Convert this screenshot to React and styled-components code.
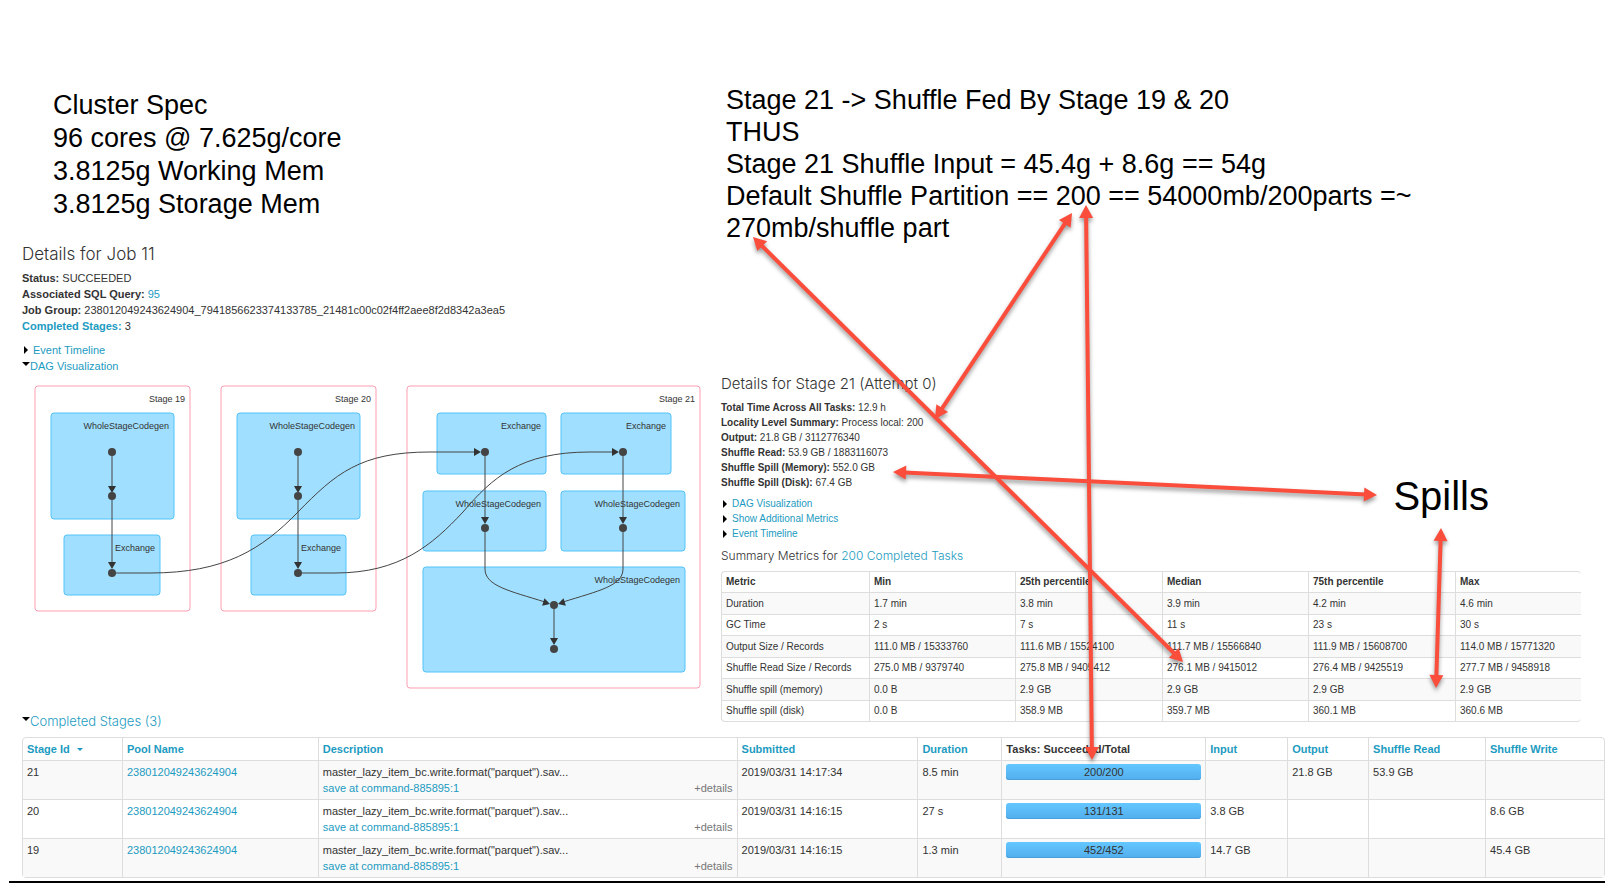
import React from "react";
import styled, { createGlobalStyle } from "styled-components";

const GlobalStyle = createGlobalStyle`
  *, *::before, *::after { box-sizing: border-box; }
  body {
    margin: 0;
    background: #fff;
    color: #333;
    font-family: "Liberation Sans", Arial, sans-serif;
    font-size: 11px;
    line-height: 16px;
  }
  h1, h2, h3, p, ul { margin: 0; padding: 0; }
`;

const Page = styled.main`
  position: relative;
  display: flex;
  flex-direction: column;
  min-width: 1200px;
`;

const Panels = styled.div`
  display: grid;
  grid-template-columns: 699fr 884fr;
  align-items: start;
  padding: 84px 9px 0 22px;
`;

const JobPanel = styled.section`
  min-width: 0;
  padding-top: 5px;
`;

const StagePanel = styled.section`
  min-width: 0;
  padding-right: 24px;
`;

const Note = styled.div`
  padding-left: ${(p) => p.$indent}px;
  margin-bottom: ${(p) => p.$after}px;
  color: #000;
  font-size: 27px;
  line-height: ${(p) => p.$line}px;
  white-space: nowrap;
`;

const Heading = styled.h2`
  font-family: Inter, "Liberation Sans", sans-serif;
  font-size: ${(p) => p.$size}px;
  font-weight: 300;
  line-height: 20px;
  white-space: nowrap;
`;

const SubHeading = styled.h3`
  display: flex;
  font-family: Inter, "Liberation Sans", sans-serif;
  font-size: ${(p) => p.$size}px;
  font-weight: 300;
  line-height: 18px;
  white-space: pre;
`;

const Link = styled.a`
  color: #1c9bc1;
  text-decoration: none;
  white-space: nowrap;
`;

const Facts = styled.ul`
  && { margin: 6px 0; }
  list-style: none;
  font-size: ${(p) => (p.$compact ? 10 : 11)}px;
  line-height: ${(p) => (p.$compact ? 15 : 16)}px;
  white-space: nowrap;
`;

const Toggles = styled.div`
  padding-top: 2px;
`;

const Toggle = styled.button`
  display: flex;
  align-items: center;
  padding: 0;
  border: 0;
  background: none;
  color: #1c9bc1;
  font: inherit;
  cursor: pointer;
`;

const Marker = styled.svg`
  flex: none;
  width: ${(p) => (p.$open ? 8 : 11)}px;
  height: 10px;
`;

const Dag = styled.svg`
  display: block;
  width: 100%;
  margin-bottom: 8px;
  font-size: 9px;
  fill: #333;

  .stage { fill: #fff; stroke: #ff9db2; }
  .cluster { fill: #a0dfff; stroke: #52c3fb; }
  .edge { fill: none; stroke: #444; }
  .node { fill: #444; }
  .head { fill: #333; }
  text { text-anchor: end; }
`;

const StageSummary = styled.div`
  display: flex;
  justify-content: space-between;
  padding-right: 92px;
`;

const Callout = styled.div`
  align-self: center;
  padding-top: 70px;
  color: #000;
  font-size: 40px;
  line-height: 46px;
`;

const Grid = styled.table`
  width: 100%;
  margin-top: ${(p) => (p.$compact ? 6 : 7)}px;
  border: 1px solid #ddd;
  border-right-width: ${(p) => (p.$compact ? 0 : 1)}px;
  border-radius: 4px;
  border-collapse: separate;
  border-spacing: 0;
  table-layout: fixed;
  font-size: ${(p) => (p.$compact ? 10 : 11)}px;

  th, td {
    height: ${(p) => (p.$compact ? 22 : 39)}px;
    padding: ${(p) => (p.$compact ? "0 4px" : "3px 4px")};
    border-left: 1px solid #ddd;
    text-align: left;
    vertical-align: ${(p) => (p.$compact ? "middle" : "top")};
    white-space: nowrap;
  }
  th { height: ${(p) => (p.$compact ? 20 : 22)}px; }
  th:first-child, td:first-child { border-left: 0; }
  td { border-top: 1px solid #ddd; }
  tbody tr:nth-child(odd) td { background: #f9f9f9; }
  tbody tr:nth-child(even) td { height: ${(p) => (p.$compact ? 21 : 39)}px; }
`;

const Completed = styled.section`
  padding: 0 9px 0 22px;
`;

const Caret = styled.span`
  display: inline-block;
  margin-left: 7px;
  vertical-align: 2px;
  border: 3px solid transparent;
  border-top-color: #1c9bc1;
  border-bottom: 0;
`;

const Details = styled.button`
  display: block;
  margin-left: auto;
  padding: 0;
  border: 0;
  background: none;
  color: #777;
  font: inherit;
  cursor: pointer;
`;

const DescriptionFoot = styled.div`
  display: flex;
`;

const Progress = styled.div`
  height: 16px;
  border-radius: 3px;
  background: linear-gradient(#64c7ff, #52aeed);
  box-shadow: inset 0 -1px 0 #4a9fdb;
  text-align: center;
`;

const Rule = styled.hr`
  width: calc(100% - 18px);
  height: 2px;
  margin: 3px 9px 0;
  border: 0;
  background: #000;
`;

const Overlay = styled.svg`
  position: absolute;
  inset: 0;
  width: 100%;
  height: 100%;
  pointer-events: none;
  fill: #fa4d3b;
  stroke: #fa4d3b;
  filter: drop-shadow(0 3px 2px rgba(0, 0, 0, 0.4));

  line { stroke-width: 4; }
  polygon { stroke: none; }
`;

function Disclosure({ open, children }) {
  return (
    <Toggle type="button" aria-expanded={!!open}>
      <Marker $open={open} viewBox={open ? "0 0 8 10" : "0 0 11 10"} aria-hidden="true">
        <path d={open ? "M0 1H8L4 5Z" : "M2 1L6 5L2 9Z"} fill="#000" />
      </Marker>
      {children}
    </Toggle>
  );
}

const STAGES = [
  [35, 386, 155, 225, "Stage 19"],
  [221, 386, 155, 225, "Stage 20"],
  [407, 386, 293, 302, "Stage 21"],
];

const CLUSTERS = [
  [51, 413, 123, 106, "WholeStageCodegen"],
  [64, 535, 96, 60, "Exchange"],
  [237, 413, 123, 106, "WholeStageCodegen"],
  [251, 535, 95, 60, "Exchange"],
  [437, 413, 109, 61, "Exchange"],
  [561, 413, 110, 61, "Exchange"],
  [423, 491, 123, 60, "WholeStageCodegen"],
  [561, 491, 124, 60, "WholeStageCodegen"],
  [423, 567, 262, 105, "WholeStageCodegen"],
];

const NODES = [
  [112, 452], [112, 496], [112, 573],
  [298, 452], [298, 496], [298, 573],
  [485, 452], [485, 528], [623, 452], [623, 528],
  [554, 605], [554, 649],
];

const EDGES = [
  "M112 452V490", "M112 496V566", "M298 452V490", "M298 496V566",
  "M485 452V521", "M623 452V521", "M554 605V643",
  "M112 573H150C225 573 262 549 298 512C335 474 360 452 430 452H476",
  "M298 573H335C400 573 432 545 463 512C492 478 520 452 590 452H614",
  "M485 528V569C485 586 510 591 545 602",
  "M623 528V569C623 586 598 591 563 602",
];

const HEADS = [
  [112, 493, 90], [112, 569, 90], [298, 493, 90], [298, 569, 90],
  [485, 524, 90], [623, 524, 90], [554, 645, 90],
  [481, 452, 0], [619, 452, 0], [550, 604, 17], [558, 604, 163],
];

function DagChart() {
  return (
    <Dag viewBox="22 374 699 330" role="img" aria-label="DAG Visualization">
      {STAGES.map(([x, y, w, h, label]) => (
        <g key={label}>
          <rect className="stage" x={x} y={y} width={w} height={h} rx="3" />
          <text x={x + w - 5} y={y + 16}>{label}</text>
        </g>
      ))}
      {CLUSTERS.map(([x, y, w, h, label], i) => (
        <g key={i}>
          <rect className="cluster" x={x} y={y} width={w} height={h} rx="3" />
          <text x={x + w - 5} y={y + 16}>{label}</text>
        </g>
      ))}
      {EDGES.map((d) => <path key={d} className="edge" d={d} />)}
      {HEADS.map(([x, y, a], i) => (
        <path key={i} className="head" d="M0 0L-7 -4V4Z" transform={`translate(${x} ${y}) rotate(${a})`} />
      ))}
      {NODES.map(([x, y], i) => <circle key={i} className="node" cx={x} cy={y} r="4" />)}
    </Dag>
  );
}

const ARROWS = [
  [753, 237, 1183, 662],
  [1072, 213, 935, 419],
  [1086, 205, 1092, 760],
  [893, 472, 1377, 495],
  [1441, 528, 1436, 688],
];

function Arrow({ from: [x1, y1], to: [x2, y2] }) {
  const angle = (Math.atan2(y2 - y1, x2 - x1) * 180) / Math.PI;
  const length = Math.hypot(x2 - x1, y2 - y1);
  return (
    <g transform={`translate(${x1} ${y1}) rotate(${angle})`}>
      <line x1="11" y1="0" x2={length - 11} y2="0" />
      <polygon points="0,0 13,-7 13,7" />
      <polygon points={`${length},0 ${length - 13},-7 ${length - 13},7`} />
    </g>
  );
}

const METRICS = [
  ["Duration", "1.7 min", "3.8 min", "3.9 min", "4.2 min", "4.6 min"],
  ["GC Time", "2 s", "7 s", "11 s", "23 s", "30 s"],
  ["Output Size / Records", "111.0 MB / 15333760", "111.6 MB / 15524100", "111.7 MB / 15566840", "111.9 MB / 15608700", "114.0 MB / 15771320"],
  ["Shuffle Read Size / Records", "275.0 MB / 9379740", "275.8 MB / 9405412", "276.1 MB / 9415012", "276.4 MB / 9425519", "277.7 MB / 9458918"],
  ["Shuffle spill (memory)", "0.0 B", "2.9 GB", "2.9 GB", "2.9 GB", "2.9 GB"],
  ["Shuffle spill (disk)", "0.0 B", "358.9 MB", "359.7 MB", "360.1 MB", "360.6 MB"],
];

const COMPLETED = [
  { id: 21, submitted: "2019/03/31 14:17:34", duration: "8.5 min", tasks: 200, input: "", output: "21.8 GB", read: "53.9 GB", write: "" },
  { id: 20, submitted: "2019/03/31 14:16:15", duration: "27 s", tasks: 131, input: "3.8 GB", output: "", read: "", write: "8.6 GB" },
  { id: 19, submitted: "2019/03/31 14:16:15", duration: "1.3 min", tasks: 452, input: "14.7 GB", output: "", read: "", write: "45.4 GB" },
];

const METRIC_COLUMNS = [147, 146, 147, 146, 147, 126];
const COMPLETED_COLUMNS = [99, 196, 419, 181, 84, 204, 82, 81, 117, 119];

function Columns({ widths }) {
  const total = widths.reduce((a, b) => a + b, 0);
  return (
    <colgroup>
      {widths.map((w, i) => <col key={i} style={{ width: `${(w / total) * 100}%` }} />)}
    </colgroup>
  );
}

export default function App() {
  return (
    <>
      <GlobalStyle />
      <Page>
        <Panels>
          <JobPanel>
            <Note $indent={31} $line={33} $after={23}>
              Cluster Spec<br />
              96 cores @ 7.625g/core<br />
              3.8125g Working Mem<br />
              3.8125g Storage Mem
            </Note>
            <Heading $size={17}>Details for Job 11</Heading>
            <Facts>
              <li><b>Status:</b> SUCCEEDED</li>
              <li><b>Associated SQL Query:</b> <Link href="#query">95</Link></li>
              <li><b>Job Group:</b> 238012049243624904_7941856623374133785_21481c00c02f4ff2aee8f2d8342a3ea5</li>
              <li><Link href="#completed"><b>Completed Stages:</b></Link> 3</li>
            </Facts>
            <Toggles>
              <Disclosure>Event Timeline</Disclosure>
              <Disclosure open>DAG Visualization</Disclosure>
            </Toggles>
            <DagChart />
            <SubHeading id="completed" $size={13}><Disclosure open>Completed Stages (3)</Disclosure></SubHeading>
          </JobPanel>

          <StagePanel>
            <Note $indent={5} $line={32} $after={130}>
              Stage 21 -&gt; Shuffle Fed By Stage 19 &amp; 20<br />
              THUS<br />
              Stage 21 Shuffle Input = 45.4g + 8.6g == 54g<br />
              Default Shuffle Partition == 200 == 54000mb/200parts =~<br />
              270mb/shuffle part
            </Note>
            <StageSummary>
              <div>
                <Heading $size={15}>Details for Stage 21 (Attempt 0)</Heading>
                <Facts $compact>
                  <li><b>Total Time Across All Tasks:</b> 12.9 h</li>
                  <li><b>Locality Level Summary:</b> Process local: 200</li>
                  <li><b>Output:</b> 21.8 GB / 3112776340</li>
                  <li><b>Shuffle Read:</b> 53.9 GB / 1883116073</li>
                  <li><b>Shuffle Spill (Memory):</b> 552.0 GB</li>
                  <li><b>Shuffle Spill (Disk):</b> 67.4 GB</li>
                </Facts>
                <Facts $compact>
                  <li><Disclosure>DAG Visualization</Disclosure></li>
                  <li><Disclosure>Show Additional Metrics</Disclosure></li>
                  <li><Disclosure>Event Timeline</Disclosure></li>
                </Facts>
              </div>
              <Callout>Spills</Callout>
            </StageSummary>
            <SubHeading $size={12}>Summary Metrics for <Link href="#tasks">200 Completed Tasks</Link></SubHeading>
            <Grid $compact>
              <Columns widths={METRIC_COLUMNS} />
              <thead>
                <tr>
                  {["Metric", "Min", "25th percentile", "Median", "75th percentile", "Max"].map((h) => (
                    <th key={h} scope="col">{h}</th>
                  ))}
                </tr>
              </thead>
              <tbody>
                {METRICS.map((row) => (
                  <tr key={row[0]}>{row.map((cell, i) => <td key={i}>{cell}</td>)}</tr>
                ))}
              </tbody>
            </Grid>
          </StagePanel>
        </Panels>

        <Completed>
          <Grid>
            <Columns widths={COMPLETED_COLUMNS} />
            <thead>
              <tr>
                <th scope="col"><Link href="#id">Stage Id<Caret /></Link></th>
                <th scope="col"><Link href="#pool">Pool Name</Link></th>
                <th scope="col"><Link href="#description">Description</Link></th>
                <th scope="col"><Link href="#submitted">Submitted</Link></th>
                <th scope="col"><Link href="#duration">Duration</Link></th>
                <th scope="col">Tasks: Succeeded/Total</th>
                <th scope="col"><Link href="#input">Input</Link></th>
                <th scope="col"><Link href="#output">Output</Link></th>
                <th scope="col"><Link href="#read">Shuffle Read</Link></th>
                <th scope="col"><Link href="#write">Shuffle Write</Link></th>
              </tr>
            </thead>
            <tbody>
              {COMPLETED.map((s) => (
                <tr key={s.id}>
                  <td>{s.id}</td>
                  <td><Link href="#pool">238012049243624904</Link></td>
                  <td>
                    master_lazy_item_bc.write.format("parquet").sav...
                    <DescriptionFoot>
                      <Link href="#stage">save at command-885895:1</Link>
                      <Details type="button">+details</Details>
                    </DescriptionFoot>
                  </td>
                  <td>{s.submitted}</td>
                  <td>{s.duration}</td>
                  <td>
                    <Progress role="progressbar" aria-valuemin={0} aria-valuemax={s.tasks} aria-valuenow={s.tasks}>
                      {s.tasks}/{s.tasks}
                    </Progress>
                  </td>
                  <td>{s.input}</td>
                  <td>{s.output}</td>
                  <td>{s.read}</td>
                  <td>{s.write}</td>
                </tr>
              ))}
            </tbody>
          </Grid>
        </Completed>
        <Rule />

        <Overlay viewBox="0 0 1614 883" preserveAspectRatio="none" aria-hidden="true">
          {ARROWS.map(([x1, y1, x2, y2]) => (
            <Arrow key={`${x1}-${y1}`} from={[x1, y1]} to={[x2, y2]} />
          ))}
        </Overlay>
      </Page>
    </>
  );
}
